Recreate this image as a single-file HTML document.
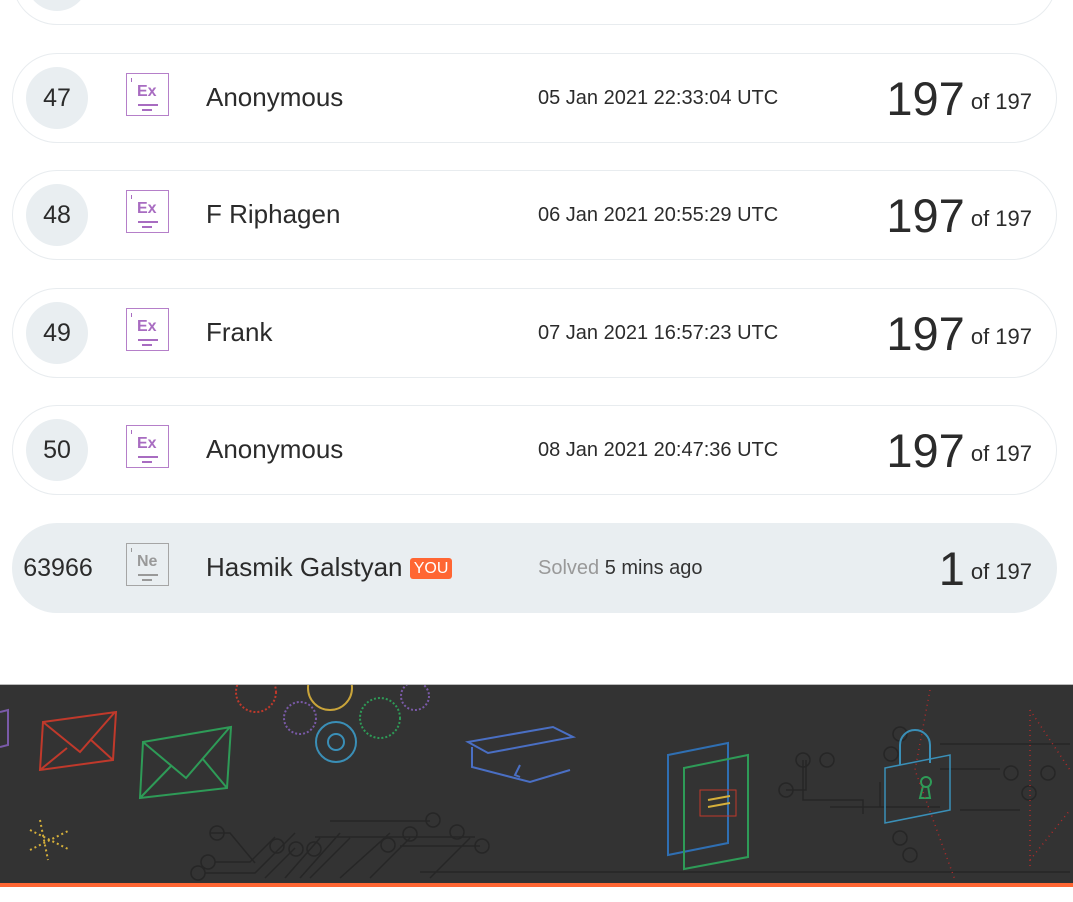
<!DOCTYPE html>
<html><head><meta charset="utf-8"><style>
body{margin:0;width:1073px;height:902px;background:#fff;position:relative;overflow:hidden;font-family:"Liberation Sans",Arial,sans-serif;color:#2b2b2b}
.row{position:absolute;left:12px;width:1043px;height:88px;border:1px solid #e8ecef;border-radius:45px;background:#fff}
.row.me{background:#e9eef1;border-color:#e9eef1}
.rk{position:absolute;left:13px;top:13px;width:62px;height:62px;border-radius:50%;background:#e9eef1;font-size:25px;line-height:62px;text-align:center}
.ic{position:absolute;left:113px;top:19px;width:41px;height:41px;border:1.5px solid #b57fc9;color:#a86cc1}
.ic b{position:absolute;left:10px;top:9px;font-size:16px;font-weight:bold}
.ic i{position:absolute;left:11px;top:30px;width:20px;height:1.5px;background:currentColor}
.ic u{position:absolute;left:15px;top:35px;width:10px;height:1.5px;background:currentColor}
.ic s{position:absolute;left:4px;top:4px;width:1px;height:4px;background:currentColor}
.nm{position:absolute;left:193px;top:28px;font-size:26px}
.dt{position:absolute;left:525px;top:33px;font-size:20px}
.sc{position:absolute;right:24px;top:17px;font-size:22px;white-space:nowrap}
.sc big{font-size:47px;vertical-align:-6px;margin-right:6px}
</style></head><body>
<div class="row" style="top:-65px"><div class="rk"></div></div>

<div class="row" style="top:53px"><div class="rk">47</div><div class="ic"><s></s><b>Ex</b><i></i><u></u></div><div class="nm">Anonymous</div><div class="dt">05 Jan 2021 22:33:04 UTC</div><div class="sc"><big>197</big>of 197</div></div>
<div class="row" style="top:170px"><div class="rk">48</div><div class="ic"><s></s><b>Ex</b><i></i><u></u></div><div class="nm">F Riphagen</div><div class="dt">06 Jan 2021 20:55:29 UTC</div><div class="sc"><big>197</big>of 197</div></div>
<div class="row" style="top:288px"><div class="rk">49</div><div class="ic"><s></s><b>Ex</b><i></i><u></u></div><div class="nm">Frank</div><div class="dt">07 Jan 2021 16:57:23 UTC</div><div class="sc"><big>197</big>of 197</div></div>
<div class="row" style="top:405px"><div class="rk">50</div><div class="ic"><s></s><b>Ex</b><i></i><u></u></div><div class="nm">Anonymous</div><div class="dt">08 Jan 2021 20:47:36 UTC</div><div class="sc"><big>197</big>of 197</div></div>
<div class="row me" style="top:523px"><div class="rk" style="background:none;left:0;width:90px;font-size:25px">63966</div><div class="ic" style="border-color:#a5a5a5;color:#999"><s></s><b>Ne</b><i></i><u></u></div><div class="nm">Hasmik Galstyan <span style="background:#ff6633;color:#fff;font-size:16px;padding:2px 4px;border-radius:3px;vertical-align:3px">YOU</span></div><div class="dt" style="color:#999">Solved <span style="color:#333">5 mins ago</span></div><div class="sc"><big>1</big>of 197</div></div>

<div style="position:absolute;left:0;top:684px;width:1073px;height:1px;background:#bbb"></div>
<svg style="position:absolute;left:0;top:685px" width="1073" height="198" viewBox="0 685 1073 198">
<rect x="0" y="685" width="1073" height="198" fill="#333"/>
<g fill="none" stroke="#262626" stroke-width="1.5">
<path d="M210 833h20l25 30M215 862h35l25-25M205 873h50l40-40M265 878l30-30M285 878l35-40M300 878l40-45M330 821h100M315 837h160M310 878l40-40M340 878l50-45M370 878l40-40M400 846h80M430 878l40-40M420 872h650"/>
<circle cx="217" cy="833" r="7"/><circle cx="208" cy="862" r="7"/><circle cx="198" cy="873" r="7"/><circle cx="277" cy="846" r="7"/><circle cx="296" cy="849" r="7"/><circle cx="314" cy="849" r="7"/><circle cx="433" cy="820" r="7"/><circle cx="457" cy="832" r="7"/><circle cx="388" cy="845" r="7"/><circle cx="410" cy="834" r="7"/><circle cx="482" cy="846" r="7"/>
<path d="M786 790h20V760M803 760v40h60v14M830 807h50v-25M880 807h60M940 769h60M940 744h130M960 810h60"/>
<circle cx="786" cy="790" r="7"/><circle cx="803" cy="760" r="7"/><circle cx="827" cy="760" r="7"/><circle cx="891" cy="754" r="7"/><circle cx="900" cy="734" r="7"/><circle cx="1011" cy="773" r="7"/><circle cx="1029" cy="793" r="7"/><circle cx="1048" cy="773" r="7"/><circle cx="900" cy="838" r="7"/><circle cx="910" cy="855" r="7"/>
</g>
<g fill="none" stroke-width="2">
<path d="M0 712l8-2v35l-8 2" stroke="#7a5aa8"/>
<path d="M43 722l73-10-3 48-73 10zM43 722l37 30 35-40M40 770l27-22M113 760l-22-20" stroke="#c0392b"/>
<path d="M143 742l88-15-4 61-87 10zM143 742l43 36 44-51M140 798l32-33M227 788l-25-30" stroke="#2e9b57"/>
<path d="M468 742l85-15 20 10-85 16zM472 747v20l58 15 40-12M520 765l-5 10 5 2" stroke="#4a6fc4"/>
<circle cx="336" cy="742" r="20" stroke="#3a8fb7"/><circle cx="336" cy="742" r="8" stroke="#3a8fb7"/>
<circle cx="330" cy="688" r="22" stroke="#c9a43a"/>
<circle cx="380" cy="718" r="20" stroke="#2e9b57" stroke-dasharray="2 2"/>
<circle cx="300" cy="718" r="16" stroke="#7a5aa8" stroke-dasharray="2 2"/>
<circle cx="256" cy="692" r="20" stroke="#c0392b" stroke-dasharray="2 2"/>
<circle cx="415" cy="696" r="14" stroke="#7a5aa8" stroke-dasharray="2 2"/>
<path d="M668 755l60-12v100l-60 12z" stroke="#2f6fb3"/>
<path d="M684 768l64-13v102l-64 12z" stroke="#2e9b57"/>
<rect x="700" y="790" width="36" height="26" stroke="#c0392b" stroke-width="1"/>
<path d="M708 800l22-4M708 807l22-4" stroke="#d6b03a"/>
<path d="M885 768l65-13v55l-65 13z" stroke="#3a8fb7" stroke-width="1.5"/>
<path d="M900 765v-20a15 15 0 0 1 30 0v18" stroke="#3a8fb7"/>
<circle cx="926" cy="782" r="5" stroke="#2e9b57"/>
<path d="M923 786l-3 12h10l-2-12" stroke="#2e9b57"/>
<path d="M40 820l8 40M30 830l40 20M30 850l40-20" stroke="#d6b03a" stroke-dasharray="2 3"/>
<path d="M930 690l-15 80 40 110M1030 710v160M1030 710l40 60M1030 860l40-50" stroke="#b12a2a" stroke-dasharray="1 4" stroke-width="1.5"/>
</g>
</svg>
<div style="position:absolute;left:0;top:883px;width:1073px;height:4px;background:#ff6633"></div>
</body></html>
